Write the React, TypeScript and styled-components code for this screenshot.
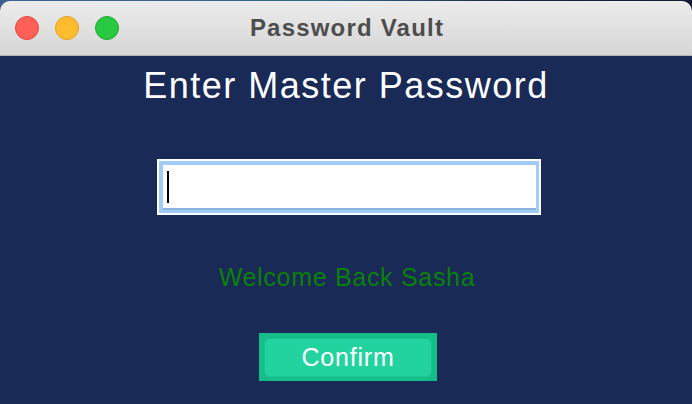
import React from "react";
import styled, { createGlobalStyle } from "styled-components";

const Global = createGlobalStyle`
  html, body {
    margin: 0;
    padding: 0;
    width: 692px;
    height: 404px;
    overflow: hidden;
  }
  body {
    background: linear-gradient(90deg, #3d5f90 0%, #2f6a8a 45%, #1a2444 75%, #161a33 100%);
    font-family: "Liberation Sans", Arial, sans-serif;
  }
`;

const Window = styled.div`
  margin-top: 1px;
  width: 692px;
  height: 403px;
  display: flex;
  flex-direction: column;
  border-radius: 10px 10px 0 0;
  overflow: hidden;
`;

const TitleBar = styled.div`
  height: 54px;
  flex: none;
  display: grid;
  grid-template-columns: 1fr auto 1fr;
  align-items: center;
  background: linear-gradient(180deg, #ececec 0%, #d6d6d6 100%);
  border-bottom: 1px solid #b4b4b4;
`;

const Lights = styled.div`
  display: flex;
  gap: 16px;
  padding-left: 15px;
`;

const Light = styled.span<{ $fill: string; $edge: string }>`
  width: 24px;
  height: 24px;
  border-radius: 50%;
  box-sizing: border-box;
  background: ${(p) => p.$fill};
  border: 1px solid ${(p) => p.$edge};
`;

const Title = styled.div`
  font-family: "Liberation Sans", Arial, sans-serif;
  font-weight: 700;
  font-size: 24px;
  letter-spacing: 1.2px;
  color: #4d4d4d;
  line-height: 1;
  padding-left: 2px;
`;

const Content = styled.div`
  flex: 1;
  background: #1a2a56;
  display: flex;
  flex-direction: column;
  align-items: center;
  padding-top: 12px;
`;

const Heading = styled.h1`
  margin: 0;
  font-family: "Liberation Sans", Arial, sans-serif;
  font-weight: 400;
  font-size: 36px;
  line-height: 35px;
  letter-spacing: 1.5px;
  color: #ffffff;
`;

const InputFrame = styled.div`
  margin-top: 56px;
  margin-left: 6px;
  width: 384px;
  height: 56px;
  box-sizing: border-box;
  background: #ffffff;
  padding: 2px;
`;

const FocusRing = styled.div`
  width: 100%;
  height: 100%;
  box-sizing: border-box;
  background: #a0ccf6;
  padding: 4px 3px 3px 4px;
`;

const Field = styled.div`
  width: 100%;
  height: 100%;
  box-sizing: border-box;
  background: #ffffff;
  box-shadow: inset 0 -2px 0 #88b3df;
  display: flex;
  align-items: flex-start;
  padding: 6px 0 0 4px;
`;

const Caret = styled.span`
  width: 2px;
  height: 32px;
  background: #000000;
`;

const Welcome = styled.div`
  margin-top: 50px;
  margin-left: 2px;
  font-family: "Liberation Sans", Arial, sans-serif;
  font-size: 25px;
  line-height: 24px;
  letter-spacing: 0.7px;
  color: #0a800a;
`;

const ButtonWell = styled.div`
  margin-top: 44px;
  margin-left: 4px;
  width: 178px;
  height: 48px;
  box-sizing: border-box;
  background: #15bd88;
  padding: 5px 5px 4px 5px;
`;

const Button = styled.button`
  width: 100%;
  height: 100%;
  box-sizing: border-box;
  border: 1px solid #1cc28f;
  border-radius: 6px;
  background: #22d3a0;
  color: #ffffff;
  font-family: "Liberation Sans", Arial, sans-serif;
  font-size: 25px;
  letter-spacing: 0.8px;
  line-height: 1;
  padding: 0 0 1px 0;
  display: flex;
  align-items: center;
  justify-content: center;
  cursor: pointer;
`;

export default function App() {
  return (
    <>
      <Global />
      <Window>
        <TitleBar>
          <Lights>
            <Light $fill="#fe5f57" $edge="#e2463f" />
            <Light $fill="#febc2e" $edge="#e0a028" />
            <Light $fill="#28c840" $edge="#1faa32" />
          </Lights>
          <Title>Password Vault</Title>
          <div />
        </TitleBar>
        <Content>
          <Heading>Enter Master Password</Heading>
          <InputFrame>
            <FocusRing>
              <Field>
                <Caret />
              </Field>
            </FocusRing>
          </InputFrame>
          <Welcome>Welcome Back Sasha</Welcome>
          <ButtonWell>
            <Button>Confirm</Button>
          </ButtonWell>
        </Content>
      </Window>
    </>
  );
}
